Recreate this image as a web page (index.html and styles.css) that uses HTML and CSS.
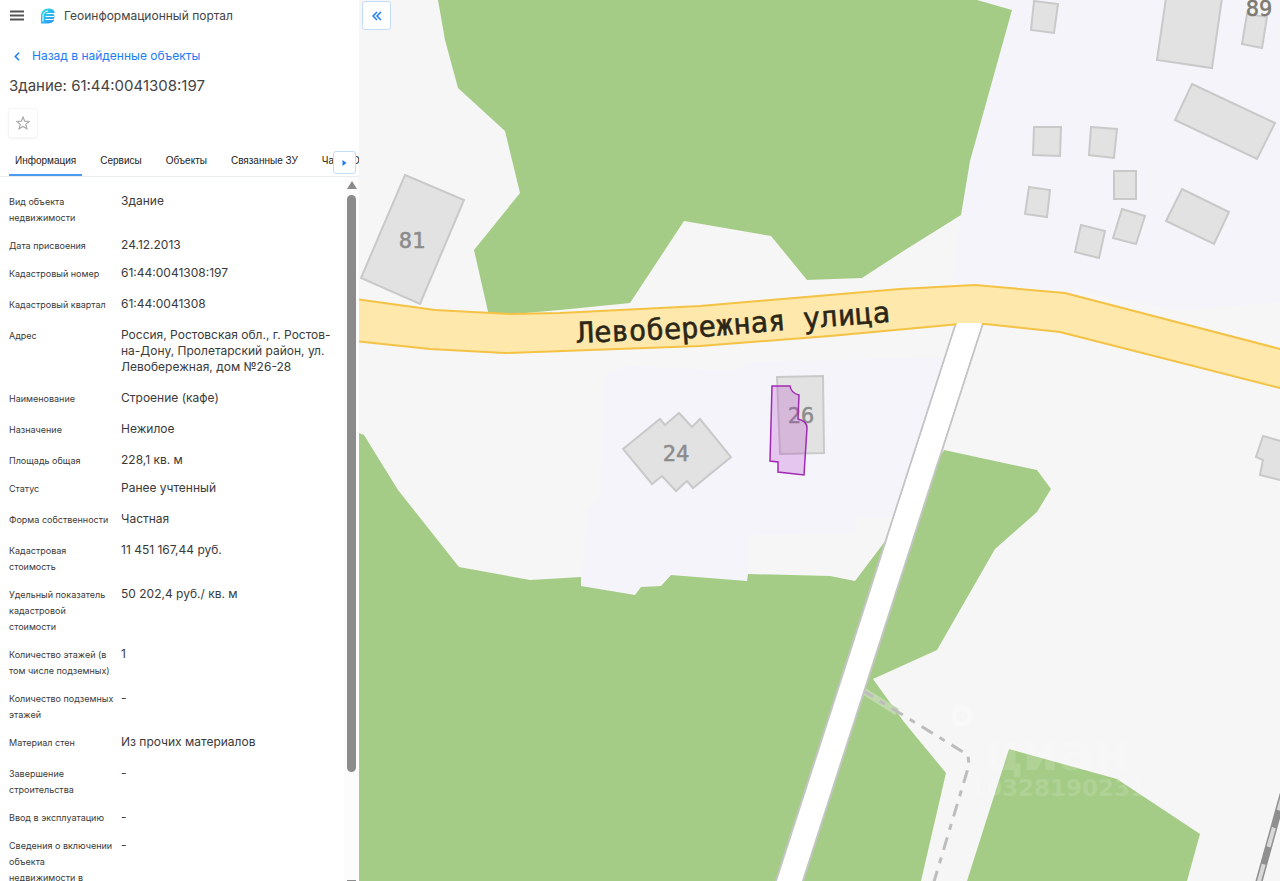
FILE: index.html
```html
<!DOCTYPE html>
<html lang="ru">
<head>
  <meta charset="UTF-8" />
  <meta name="viewport" content="width=device-width, initial-scale=1.0" />
  <title>Геоинформационный портал</title>
  <link rel="stylesheet" href="styles.css">
</head>
<body>
  <aside class="sidebar">
    <header class="topbar">
      <button class="icon-btn" aria-label="Меню">
        <svg width="14" height="12" viewBox="0 0 14 12"><path d="M0 1.500h14M0 5.500h14M0 9.500h14" stroke="#555" stroke-width="2"/></svg>
      </button>
      <svg class="logo" width="16" height="16" viewBox="0 0 16 16">
        <defs>
          <linearGradient id="logoFill" x1="0" y1="0" x2="1" y2="1">
            <stop offset="0" stop-color="#2fe0e8"/>
            <stop offset="1" stop-color="#2b8ff5"/>
          </linearGradient>
        </defs>
        <path d="M1 15.500V8C1 3.500 4 .5 8.500 .5 12 .5 14 2 14.800 4.200L13.500 6.500 15 8.500 13.500 11 14 12.500C12.500 14.800 10.500 15.500 8 15.500z" fill="url(#logoFill)"/>
        <path d="M3 13.500V8.500C3 5 5 3 8 3M6.500 5.500h8M5.500 8.500h9M5.500 11.500h8" fill="none" stroke="#fff" stroke-width="1"/>
      </svg>
      <span class="brand">Геоинформационный портал</span>
    </header>

    <a class="back" href="#">
      <svg width="6" height="9" viewBox="0 0 6 9"><path d="M5 .8 1.300 4.500 5 8.200" fill="none" stroke="#1a7df5" stroke-width="1.500"/></svg>
      Назад в найденные объекты
    </a>
    <h1>Здание: 61:44:0041308:197</h1>
    <button class="star" aria-label="В избранное">
      <svg width="14" height="14" viewBox="0 0 14 14"><path d="M7 1l1.700 4.200 4.500.3-3.500 2.900 1.200 4.400L7 10.400l-3.900 2.400 1.200-4.400L.8 5.500l4.500-.3z" fill="none" stroke="#aaa" stroke-width="1.200"/></svg>
    </button>

    <nav class="tabs">
      <button class="tab active">Информация</button>
      <button class="tab">Сервисы</button>
      <button class="tab">Объекты</button>
      <button class="tab">Связанные ЗУ</button>
      <button class="tab">Части ОКС</button>
      <button class="tabs-next" aria-label="Дальше">
        <svg width="5" height="6" viewBox="0 0 5 6"><path d="M.5 0 4.500 3 .5 6z" fill="#1a7df5"/></svg>
      </button>
    </nav>

    <div class="panel">
      <dl class="props">
        <div class="row"><dt>Вид объекта недвижимости</dt><dd>Здание</dd></div>
        <div class="row tight"><dt>Дата присвоения</dt><dd>24.12.2013</dd></div>
        <div class="row"><dt>Кадастровый номер</dt><dd>61:44:0041308:197</dd></div>
        <div class="row"><dt>Кадастровый квартал</dt><dd>61:44:0041308</dd></div>
        <div class="row"><dt>Адрес</dt><dd>Россия, Ростовская обл., г. Ростов-на-Дону, Пролетарский район, ул. Левобережная, дом №26-28</dd></div>
        <div class="row"><dt>Наименование</dt><dd>Строение (кафе)</dd></div>
        <div class="row"><dt>Назначение</dt><dd>Нежилое</dd></div>
        <div class="row tight"><dt>Площадь общая</dt><dd>228,1 кв. м</dd></div>
        <div class="row"><dt>Статус</dt><dd>Ранее учтенный</dd></div>
        <div class="row"><dt>Форма собственности</dt><dd>Частная</dd></div>
        <div class="row"><dt>Кадастровая стоимость</dt><dd>11 451 167,44 руб.</dd></div>
        <div class="row"><dt>Удельный показатель кадастровой стоимости</dt><dd>50 202,4 руб./ кв. м</dd></div>
        <div class="row"><dt>Количество этажей (в том числе подземных)</dt><dd>1</dd></div>
        <div class="row"><dt>Количество подземных этажей</dt><dd>-</dd></div>
        <div class="row"><dt>Материал стен</dt><dd>Из прочих материалов</dd></div>
        <div class="row"><dt>Завершение строительства</dt><dd>-</dd></div>
        <div class="row tight"><dt>Ввод в эксплуатацию</dt><dd>-</dd></div>
        <div class="row"><dt>Сведения о включении объекта <br>недвижимости в реестр</dt><dd>-</dd></div>
      </dl>
      <div class="scrollbar">
        <span class="arrow-up"></span>
        <div class="track"><div class="thumb"></div></div>
        <span class="arrow-down"></span>
      </div>
    </div>
  </aside>

  <main class="map">
    <svg class="map-canvas" viewBox="359 0 921 881" preserveAspectRatio="xMinYMin slice">
      <!-- residential areas -->
      <g fill="#f5f4fb">
        <path d="M977 0H1280V302L1180 310 1065 290 952 283 961 215z"/>
        <path d="M605 374 630 366 735 371 750 362 945 357 893 517 856 518 855 533 748 535V581L671 575 635 597 581 588 587 510 599 500z"/>
      </g>

      <!-- greenery -->
      <g fill="#a5cc87">
        <path d="M438 0 445 40 458 88 505 131 520 193 474 250 489 316 560 310 630 303 684 221 771 236 807 280 862 278 905 250 961 215 970 161 1012 10 977 0z"/>
        <path d="M359 433 364 435 398 490 459 567 530 580 581 577V586L635 595 641 587 661 586 671 575 747 581 748 574 830 576 855 581 886 540 900 520 790 881H359z"/>
        <path d="M944 450 1037 470 1051 489 1037 512 995 549 937 650 873 679 904 722 946 773 921 881H790L920 490z"/>
        <path d="M1009 749 1117 779 1200 834 1187 881H967z"/>
      </g>

      <!-- footpath -->
      <path d="M862 690 897 712" stroke="#c0d9ac" stroke-width="7"/>
      <path d="M862 690 968 755 969 765 933 885" fill="none" stroke="#bdbdbd" stroke-width="3" stroke-dasharray="13 8 6 8"/>

      <!-- railway -->
      <path d="M1284 791 1258 885" stroke="#8f8f8f" stroke-width="7"/>
      <path d="M1284 791 1258 885" stroke="#d8d8d8" stroke-width="4" stroke-dasharray="20 18"/>

      <!-- side road edges, the white surface goes over the main road below -->
      <path d="M956 323 775 884M983 323 802 884" stroke="#c4c4c4" stroke-width="2"/>

      <!-- buildings -->
      <g fill="#e2e2e2" stroke="#c9c9c9" stroke-width="2">
        <path d="M405 175 464 200 420 304 361 278z"/>
        <path d="M1034 1 1058 4 1054 33 1031 30z"/>
        <path d="M1166 -2 1222 -2 1212 68 1157 60z"/>
        <path d="M1247 14 1267 17 1262 48 1242 44z"/>
        <path d="M1192 84 1275 123 1257 159 1175 120z"/>
        <path d="M1034 127H1061L1060 156 1033 155z"/>
        <path d="M1091 127 1117 129 1114 158 1089 155z"/>
        <path d="M1114 171H1136V199H1114z"/>
        <path d="M1029 187 1050 190 1047 217 1025 214z"/>
        <path d="M1122 209 1145 216 1136 244 1113 238z"/>
        <path d="M1081 225 1105 231 1099 258 1075 252z"/>
        <path d="M1182 189 1229 212 1214 244 1166 221z"/>
        <path d="M1284 442 1263 436 1256 457 1263 460 1260 475 1284 481z"/>
        <path d="M623 449 660 419 665 425 679 413 692 427 700 419 731 457 693 488 687 481 676 491 662 476 652 484z"/>
        <path d="M777 377 823 376 824 453 780 454z"/>
      </g>
      <g class="house-number">
        <text x="412" y="248">81</text>
        <text x="676" y="461">24</text>
        <text x="801" y="423">26</text>
        <text class="dark" x="1259" y="16">89</text>
      </g>

      <!-- main road -->
      <path d="M355 299 435 310 510 314 560 313 700 306 900 289 975 285 1065 293 1284 350V389L1060 332 985 324 960 324 830 336 700 346 590 350 505 353 430 349 355 341z" fill="#fee8ac" stroke="#f4c244" stroke-width="2"/>
      <path d="M957 323H982L801 884H776z" fill="#fff"/>
      <path id="street" d="M577 343 690 338 912 320" fill="none"/>
      <text class="street-name"><textPath href="#street">Левобережная улица</textPath></text>

      <!-- selected building -->
      <path d="M772 386H790Q791 393 799 395L798 419Q807 421 807 428L804 475 778 472V462L770 461z" fill="#b53bc8" fill-opacity=".25" stroke="#a12ab3" stroke-width="1.500"/>

      <!-- watermark -->
      <g class="watermark">
        <circle cx="962" cy="716" r="8"/>
        <text class="mark-name" x="984" y="770">циан</text>
        <text class="mark-id" x="970" y="796">10328190231</text>
      </g>
    </svg>
    <button class="collapse" aria-label="Свернуть панель">
      <svg width="10" height="10" viewBox="0 0 10 10"><path d="M5 1 1 5l4 4M9 1 5 5l4 4" fill="none" stroke="#1a7df5" stroke-width="1.500"/></svg>
    </button>
  </main>
</body>
</html>
```
FILE: styles.css
```css
* {
  box-sizing: border-box;
}

body {
  margin: 0;
  height: 100vh;
  display: flex;
  overflow: hidden;
  background: #fff;
  color: #3a3a3a;
  font-family: Inter, "Noto Sans", sans-serif;
  font-size: 12px;
  line-height: 16px;
}

button {
  padding: 0;
  border: none;
  background: none;
  color: inherit;
  font: inherit;
  cursor: pointer;
}

svg {
  display: block;
}

.sidebar {
  flex: 0 0 359px;
  display: flex;
  flex-direction: column;
  min-height: 0;
}

.topbar {
  display: flex;
  align-items: center;
  height: 31px;
  padding: 0 10px;
}

.logo {
  margin: 0 8px 0 16px;
}

.brand {
  color: #444;
}

.back {
  display: flex;
  align-items: center;
  gap: 12px;
  margin: 17px 14px 0;
  color: #1a7df5;
  text-decoration: none;
}

h1 {
  margin: 12px 9px;
  font-size: 15px;
  font-weight: 400;
  line-height: 20px;
  color: #444;
}

.star {
  display: flex;
  align-items: center;
  justify-content: center;
  width: 30px;
  height: 30px;
  margin-left: 8px;
  border: 1px solid #f5f5f5;
  border-radius: 3px;
  box-shadow: 0 1px 2px rgba(0, 0, 0, 0.05);
}

.tabs {
  position: relative;
  display: flex;
  flex: none;
  gap: 12px;
  height: 30px;
  margin-top: 9px;
  padding-left: 9px;
  overflow: hidden;
  border-bottom: 1px solid #e9eef3;
}

.tab {
  flex: none;
  padding: 0 6px;
  font-family: "Liberation Sans", sans-serif;
  font-size: 10px;
  color: #222;
  border-bottom: 2px solid transparent;
}

.tab.active {
  border-bottom-color: #4a9bf0;
}

.tabs-next {
  position: absolute;
  top: 4px;
  right: 3px;
  display: flex;
  align-items: center;
  justify-content: center;
  width: 23px;
  height: 23px;
  background: #fff;
  border: 1px solid #c3dcf8;
  border-radius: 3px;
}

.panel {
  display: flex;
  flex: 1;
  min-height: 0;
}

.props {
  flex: 1;
  margin: 0;
  padding: 16px 12px 0 9px;
  overflow: hidden;
}

.row {
  display: grid;
  grid-template-columns: 105px 1fr;
  align-items: first baseline;
  column-gap: 7px;
  margin-bottom: 11px;
}

dt {
  font-size: 9px;
}

dd {
  margin: 0;
  padding-bottom: 4px;
}

.tight dd {
  padding-bottom: 0;
}

.scrollbar {
  display: flex;
  flex-direction: column;
  align-items: center;
  width: 15px;
  padding-top: 4px;
  background: #fcfcfc;
}

.track {
  flex: 1;
  width: 9px;
  margin: 6px 0;
}

.thumb {
  height: 85%;
  background: #8b8b8b;
  border-radius: 5px;
}

.arrow-up {
  border: 5px solid transparent;
  border-top: none;
  border-bottom: 8px solid #8b8b8b;
}

.arrow-down {
  width: 9px;
  height: 1px;
  background: #8b8b8b;
}

.map {
  position: relative;
  flex: 1;
  min-width: 0;
  background: #f6f6f6;
}

.map-canvas {
  width: 100%;
  height: 100%;
}

.house-number {
  fill: #8c8c8c;
  stroke: #8c8c8c;
  stroke-width: 0.5px;
  font-family: "DejaVu Sans Mono", monospace;
  font-size: 22px;
  text-anchor: middle;
}

.house-number .dark {
  fill: #7d7a70;
  stroke: #7d7a70;
}

.street-name {
  fill: #2b2616;
  stroke: #2b2616;
  stroke-width: 0.5px;
  font-family: "DejaVu Sans Mono", monospace;
  font-size: 29px;
}

.watermark {
  fill: #fff;
  fill-opacity: 0.12;
  font-family: "DejaVu Sans", sans-serif;
  font-weight: 700;
}

.watermark circle {
  fill: none;
  stroke: #fff;
  stroke-opacity: 0.3;
  stroke-width: 5px;
}

.mark-name {
  font-size: 52px;
}

.mark-id {
  font-size: 23px;
}

.collapse {
  position: absolute;
  top: 1px;
  left: 3px;
  display: flex;
  align-items: center;
  justify-content: center;
  width: 29px;
  height: 29px;
  background: #fff;
  border: 1px solid #c3dcf8;
  border-radius: 3px;
}
```
